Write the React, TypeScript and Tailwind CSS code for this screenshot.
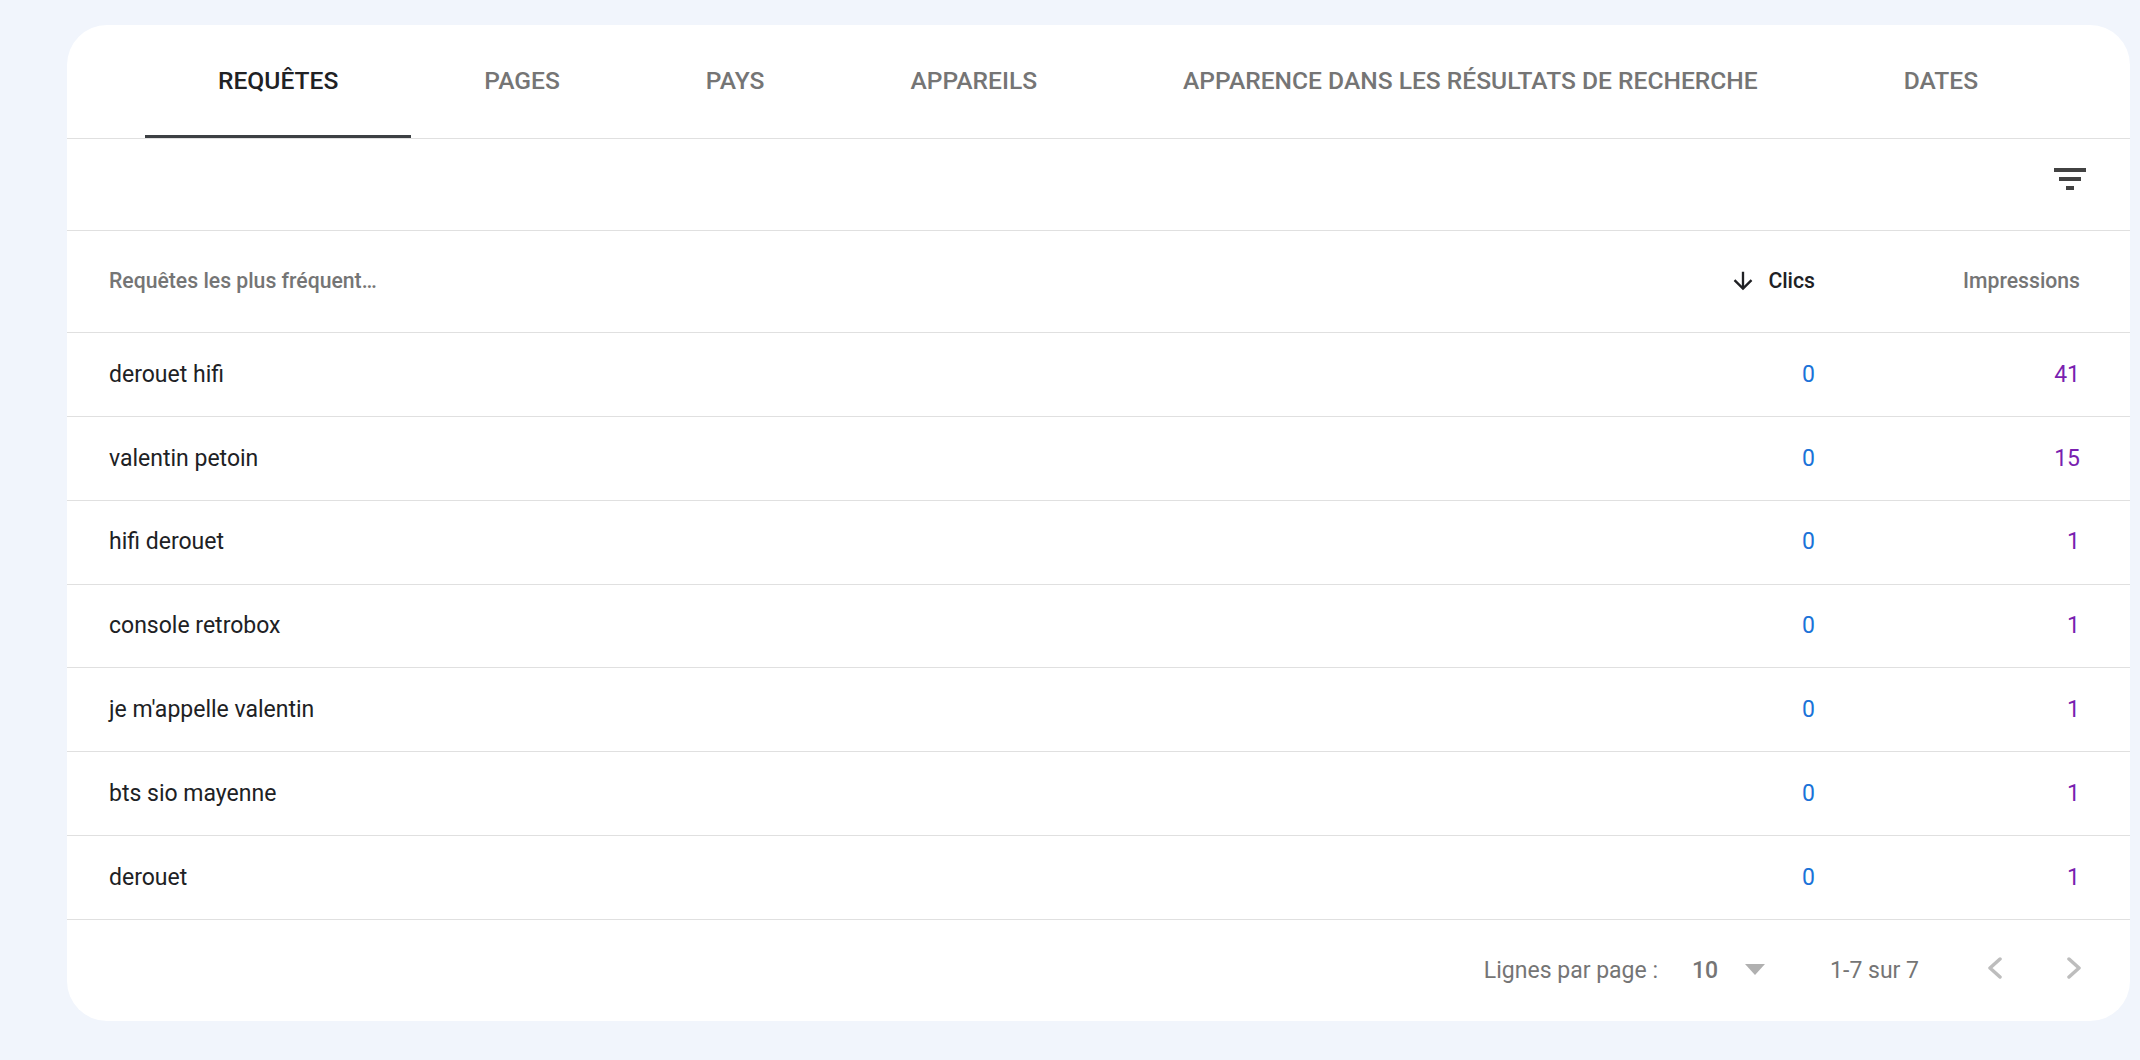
const tabs = ['REQUÊTES', 'PAGES', 'PAYS', 'APPAREILS', 'APPARENCE DANS LES RÉSULTATS DE RECHERCHE', 'DATES']

const rows = [
  { query: 'derouet hifi', clicks: 0, impressions: 41 },
  { query: 'valentin petoin', clicks: 0, impressions: 15 },
  { query: 'hifi derouet', clicks: 0, impressions: 1 },
  { query: 'console retrobox', clicks: 0, impressions: 1 },
  { query: "je m'appelle valentin", clicks: 0, impressions: 1 },
  { query: 'bts sio mayenne', clicks: 0, impressions: 1 },
  { query: 'derouet', clicks: 0, impressions: 1 },
]

function Tabs() {
  return (
    <div className="flex h-[114px] border-b border-[#e0e0e0] pl-[78px]">
      {tabs.map((tab, index) => (
        <div
          key={tab}
          className={`flex items-center border-b-[3px] px-[73px] pt-[2px] text-[24.6px] font-medium whitespace-nowrap ${
            index === 0 ? 'border-[#3c4043] text-[#202124]' : 'border-transparent text-[#757575]'
          }`}
        >
          {tab}
        </div>
      ))}
    </div>
  )
}

function Toolbar() {
  return (
    <div className="flex h-[92px] items-center justify-end border-b border-[#e0e0e0] pb-[12px] pr-[44px]">
      <svg width="32" height="22" viewBox="0 0 32 22" fill="#424242">
        <path d="M0 0h32v4H0zM5 9h22v4H5zM12 18h8v4h-8z" />
      </svg>
    </div>
  )
}

function TableHeader() {
  return (
    <div className="flex h-[102px] items-center border-b border-[#e0e0e0] pb-[1px] pl-[42px] pr-[50px] text-[21.2px] font-medium text-[#757575]">
      <div className="flex-1">Requêtes les plus fréquent…</div>
      <div className="flex items-center gap-[11px] text-[#202124]">
        <svg width="28" height="28" viewBox="0 0 24 24" fill="#202124">
          <path d="M20 12l-1.41-1.41L13 16.17V4h-2v12.17l-5.58-5.59L4 12l8 8 8-8z" />
        </svg>
        Clics
      </div>
      <div className="w-[265px] text-right">Impressions</div>
    </div>
  )
}

function Pagination() {
  return (
    <div className="flex h-[102px] items-center justify-end pr-[48px] text-[23px] text-[#757575]">
      <span>Lignes par page :</span>
      <span className="ml-[34px] font-medium">10</span>
      <svg className="mb-[3px] ml-[27px]" width="20" height="11" viewBox="0 0 20 11" fill="#b0b0b0">
        <path d="M0 0h20L10 11z" />
      </svg>
      <span className="ml-[65px]">1-7 sur 7</span>
      <svg className="mb-[6px] ml-[68px]" width="16" height="22" viewBox="0 0 16 22" fill="none" stroke="#bdbdbd" strokeWidth="3.5" strokeLinecap="round" strokeLinejoin="round">
        <path d="M13 2L3 11l10 9" />
      </svg>
      <svg className="mb-[6px] ml-[63px]" width="16" height="22" viewBox="0 0 16 22" fill="none" stroke="#bdbdbd" strokeWidth="3.5" strokeLinecap="round" strokeLinejoin="round">
        <path d="M3 2l10 9-10 9" />
      </svg>
    </div>
  )
}

export default function App() {
  return (
    <div className="h-[1060px] bg-[#f1f5fc] pl-[67px] pr-[10px] pt-[25px] font-['Roboto',sans-serif]">
      <div className="h-[996px] rounded-[40px] bg-white">
        <Tabs />
        <Toolbar />
        <TableHeader />
        {rows.map((row) => (
          <div
            key={row.query}
            className="flex h-[83.86px] items-center border-b border-[#e0e0e0] pl-[42px] pr-[50px] pt-[1px] text-[23px]"
          >
            <div className="flex-1 text-[#202124]">{row.query}</div>
            <div className="text-[#1a73d8]">{row.clicks}</div>
            <div className="w-[265px] text-right text-[#7a1fb0]">{row.impressions}</div>
          </div>
        ))}
        <Pagination />
      </div>
    </div>
  )
}
